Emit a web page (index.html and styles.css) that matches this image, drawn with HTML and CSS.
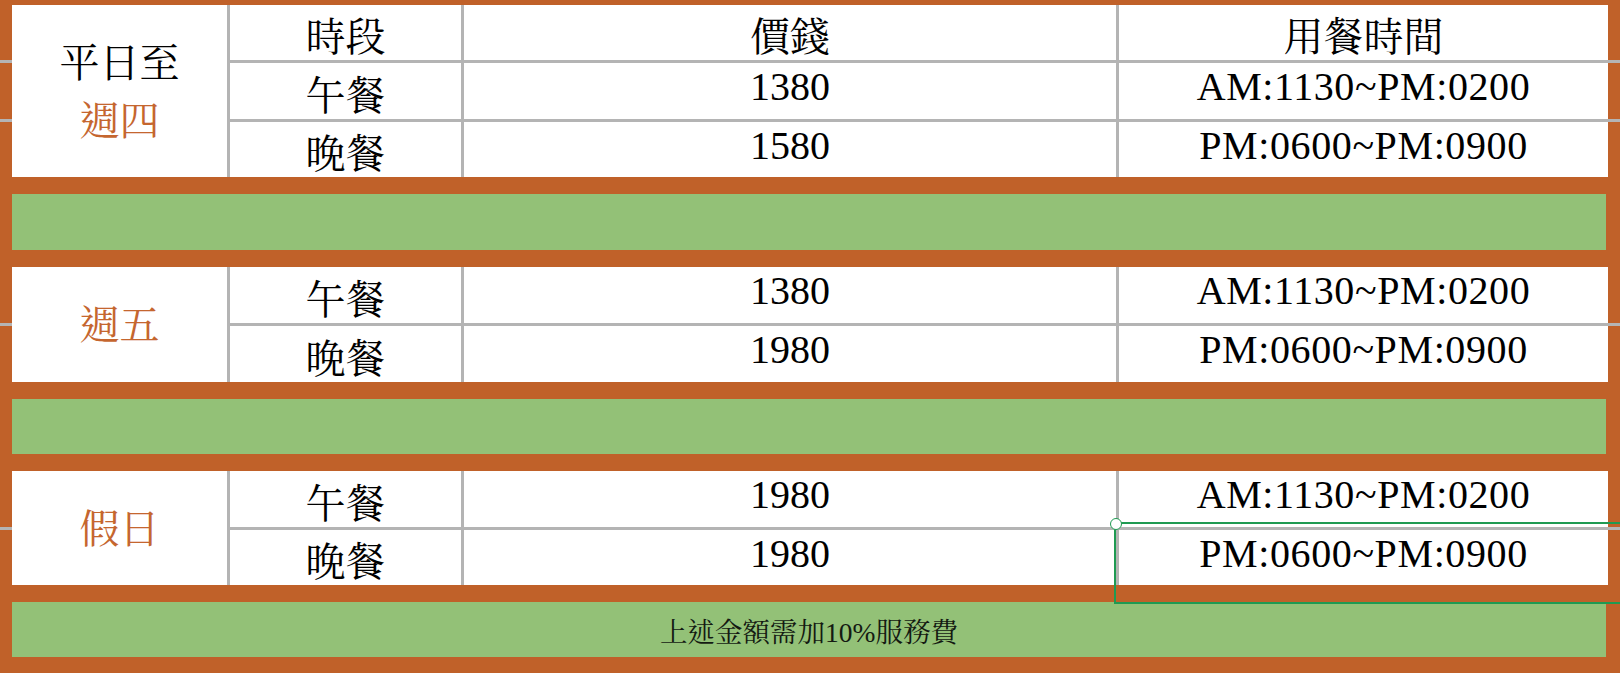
FILE: index.html
```html
<!DOCTYPE html>
<html lang="zh-Hant">
<head>
<meta charset="utf-8">
<title>用餐時段價目表</title>
<link rel="stylesheet" href="styles.css">
</head>
<body>
<main class="sheet">
  <section class="group group-1">
    <div class="edge"></div>
    <div class="cell day"><span>平日至<br><span class="accent">週四</span></span></div>
    <div class="cell ruled cjk">時段</div>
    <div class="cell ruled cjk">價錢</div>
    <div class="cell ruled cjk">用餐時間</div>
    <div class="edge"></div>

    <div class="edge top"></div>
    <div class="cell ruled top cjk">午餐</div>
    <div class="cell ruled top num">1380</div>
    <div class="cell ruled top num time">AM:1130~PM:0200</div>
    <div class="edge top"></div>

    <div class="edge top"></div>
    <div class="cell ruled top cjk">晚餐</div>
    <div class="cell ruled top num">1580</div>
    <div class="cell ruled top num time">PM:0600~PM:0900</div>
    <div class="edge top"></div>
  </section>

  <div class="band band-tall"></div>

  <section class="group group-2">
    <div class="edge"></div>
    <div class="cell day"><span class="accent">週五</span></div>
    <div class="cell ruled cjk">午餐</div>
    <div class="cell ruled num">1380</div>
    <div class="cell ruled num time">AM:1130~PM:0200</div>
    <div class="edge"></div>

    <div class="edge top"></div>
    <div class="cell ruled top cjk">晚餐</div>
    <div class="cell ruled top num">1980</div>
    <div class="cell ruled top num time">PM:0600~PM:0900</div>
    <div class="edge top"></div>
  </section>

  <div class="band"></div>

  <section class="group group-3">
    <div class="edge"></div>
    <div class="cell day"><span class="accent">假日</span></div>
    <div class="cell ruled cjk">午餐</div>
    <div class="cell ruled num">1980</div>
    <div class="cell ruled num time">AM:1130~PM:0200</div>
    <div class="edge"></div>

    <div class="edge top"></div>
    <div class="cell ruled top cjk">晚餐</div>
    <div class="cell ruled top num">1980</div>
    <div class="cell ruled top num time">PM:0600~PM:0900</div>
    <div class="edge top"></div>
  </section>

  <div class="band note">上述金額需加10%服務費</div>

  <div class="selection"><span class="handle"></span></div>
</main>
</body>
</html>
```

FILE: styles.css
```css
html, body {
  margin: 0;
  padding: 0;
  overflow: hidden;
  background: #c06129;
}

.sheet {
  position: relative;
  width: 1620px;
  height: 673px;
  padding-top: 5px;
  box-sizing: border-box;
  display: flex;
  flex-direction: column;
  font-family: "Liberation Serif", "Noto Serif CJK TC", "Noto Sans CJK TC", serif;
  color: #000;
  overflow: hidden;
}

.group {
  display: grid;
  grid-template-columns: 12px 215px 234px 655px 492px 12px;
}

.group-1 { grid-template-rows: 55px 59px 58px; }
.group-2 { grid-template-rows: 56px 59px; }
.group-3 { grid-template-rows: 56px 58px; }

.edge {
  box-sizing: border-box;
}

.edge.top {
  border-top: 3px solid #b4b4b4;
}

.cell {
  box-sizing: border-box;
  background: #fff;
  display: flex;
  align-items: center;
  justify-content: center;
  font-size: 40px;
  line-height: 1;
  white-space: nowrap;
}

.cell.ruled {
  border-left: 3px solid #b4b4b4;
}

.cell.top {
  border-top: 3px solid #b4b4b4;
}

.cell.cjk {
  padding-top: 11px;
}

.cell.num {
  padding-bottom: 8px;
}

.cell.time {
  letter-spacing: 0.6px;
}

.day {
  grid-row: 1 / -1;
  grid-column: 2;
  line-height: 58px;
  text-align: center;
  padding-top: 3px;
}

.accent {
  color: #c5662f;
}

.band {
  height: 55px;
  margin: 17px 14px 17px 12px;
  background: #93c177;
  flex-shrink: 0;
}

.band.band-tall {
  height: 56px;
}

.band.note {
  margin-bottom: 0;
  display: flex;
  align-items: center;
  justify-content: center;
  padding-top: 6px;
  box-sizing: border-box;
  font-size: 27.5px;
  line-height: 1;
  color: #141a12;
}

.selection {
  position: absolute;
  left: 1114px;
  top: 522px;
  width: 540px;
  height: 82px;
  border: 2px solid #1f9a52;
  border-right: none;
  box-sizing: border-box;
}

.handle {
  position: absolute;
  left: -6px;
  top: -6px;
  width: 10px;
  height: 10px;
  border: 1.5px solid #1f9a52;
  border-radius: 50%;
  background: #fff;
}
```
